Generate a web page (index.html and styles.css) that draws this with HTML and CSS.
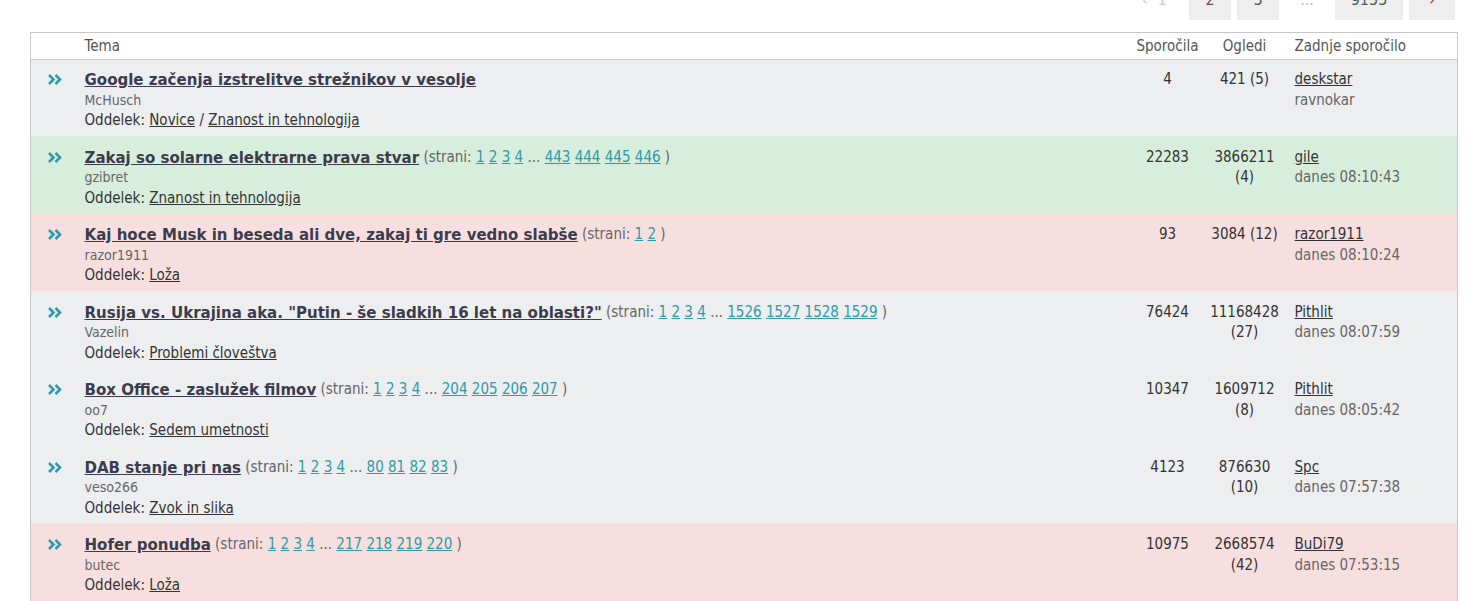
FILE: index.html
```html
<!DOCTYPE html>
<html lang="sl">
<head>
    <meta charset="UTF-8">
    <meta name="viewport" content="width=device-width, initial-scale=1.0">
    <title>Forum</title>
    <link rel="stylesheet" href="styles.css">
</head>
<body>

    <div class="page">
        <div class="pager">
            <span class="pager-off">&lsaquo;</span>
            <span class="pager-off pager-current">1</span>
            <a class="pager-btn" href="#">2</a>
            <a class="pager-btn" href="#">3</a>
            <span class="pager-gap">...</span>
            <a class="pager-btn pager-wide" href="#">9155</a>
            <a class="pager-btn pager-next" href="#">&rsaquo;</a>
        </div>

        <table class="topics">
            <colgroup>
                <col class="c-icon">
                <col>
                <col class="c-posts">
                <col class="c-views">
                <col class="c-last">
            </colgroup>
            <thead>
                <tr>
                    <th></th>
                    <th class="left">Tema</th>
                    <th>Sporočila</th>
                    <th>Ogledi</th>
                    <th class="left">Zadnje sporočilo</th>
                </tr>
            </thead>
            <tbody>
                <tr class="plain">
                    <td class="icon"><svg width="14" height="11" viewBox="0 0 14 11"><path d="M1 1l4.5 4.5L1 10M7.5 1L12 5.5 7.5 10" /></svg></td>
                    <td class="topic">
                        <div class="head"><a class="title" href="#">Google začenja izstrelitve strežnikov v vesolje</a></div>
                        <div class="author">McHusch</div>
                        <div class="section">Oddelek: <a href="#">Novice</a> / <a href="#">Znanost in tehnologija</a></div>
                    </td>
                    <td class="num">4</td>
                    <td class="num">421 (5)</td>
                    <td class="last"><a href="#">deskstar</a><div class="when">ravnokar</div></td>
                </tr>
                <tr class="hot paged">
                    <td class="icon"><svg width="14" height="11" viewBox="0 0 14 11"><path d="M1 1l4.5 4.5L1 10M7.5 1L12 5.5 7.5 10" /></svg></td>
                    <td class="topic">
                        <div class="head"><a class="title" href="#">Zakaj so solarne elektrarne prava stvar</a>
                        <span class="pages">(strani: <a href="#">1</a> <a href="#">2</a> <a href="#">3</a> <a href="#">4</a> ... <a href="#">443</a> <a href="#">444</a> <a href="#">445</a> <a href="#">446</a> )</span></div>
                        <div class="author">gzibret</div>
                        <div class="section">Oddelek: <a href="#">Znanost in tehnologija</a></div>
                    </td>
                    <td class="num">22283</td>
                    <td class="num">3866211 (4)</td>
                    <td class="last"><a href="#">gile</a><div class="when">danes 08:10:43</div></td>
                </tr>
                <tr class="warm paged">
                    <td class="icon"><svg width="14" height="11" viewBox="0 0 14 11"><path d="M1 1l4.5 4.5L1 10M7.5 1L12 5.5 7.5 10" /></svg></td>
                    <td class="topic">
                        <div class="head"><a class="title" href="#">Kaj hoce Musk in beseda ali dve, zakaj ti gre vedno slabše</a>
                        <span class="pages">(strani: <a href="#">1</a> <a href="#">2</a> )</span></div>
                        <div class="author">razor1911</div>
                        <div class="section">Oddelek: <a href="#">Loža</a></div>
                    </td>
                    <td class="num">93</td>
                    <td class="num">3084 (12)</td>
                    <td class="last"><a href="#">razor1911</a><div class="when">danes 08:10:24</div></td>
                </tr>
                <tr class="plain paged">
                    <td class="icon"><svg width="14" height="11" viewBox="0 0 14 11"><path d="M1 1l4.5 4.5L1 10M7.5 1L12 5.5 7.5 10" /></svg></td>
                    <td class="topic">
                        <div class="head"><a class="title" href="#">Rusija vs. Ukrajina aka. "Putin - še sladkih 16 let na oblasti?"</a>
                        <span class="pages">(strani: <a href="#">1</a> <a href="#">2</a> <a href="#">3</a> <a href="#">4</a> ... <a href="#">1526</a> <a href="#">1527</a> <a href="#">1528</a> <a href="#">1529</a> )</span></div>
                        <div class="author">Vazelin</div>
                        <div class="section">Oddelek: <a href="#">Problemi človeštva</a></div>
                    </td>
                    <td class="num">76424</td>
                    <td class="num">11168428 (27)</td>
                    <td class="last"><a href="#">Pithlit</a><div class="when">danes 08:07:59</div></td>
                </tr>
                <tr class="plain paged">
                    <td class="icon"><svg width="14" height="11" viewBox="0 0 14 11"><path d="M1 1l4.5 4.5L1 10M7.5 1L12 5.5 7.5 10" /></svg></td>
                    <td class="topic">
                        <div class="head"><a class="title" href="#">Box Office - zaslužek filmov</a>
                        <span class="pages">(strani: <a href="#">1</a> <a href="#">2</a> <a href="#">3</a> <a href="#">4</a> ... <a href="#">204</a> <a href="#">205</a> <a href="#">206</a> <a href="#">207</a> )</span></div>
                        <div class="author">oo7</div>
                        <div class="section">Oddelek: <a href="#">Sedem umetnosti</a></div>
                    </td>
                    <td class="num">10347</td>
                    <td class="num">1609712 (8)</td>
                    <td class="last"><a href="#">Pithlit</a><div class="when">danes 08:05:42</div></td>
                </tr>
                <tr class="plain paged">
                    <td class="icon"><svg width="14" height="11" viewBox="0 0 14 11"><path d="M1 1l4.5 4.5L1 10M7.5 1L12 5.5 7.5 10" /></svg></td>
                    <td class="topic">
                        <div class="head"><a class="title" href="#">DAB stanje pri nas</a>
                        <span class="pages">(strani: <a href="#">1</a> <a href="#">2</a> <a href="#">3</a> <a href="#">4</a> ... <a href="#">80</a> <a href="#">81</a> <a href="#">82</a> <a href="#">83</a> )</span></div>
                        <div class="author">veso266</div>
                        <div class="section">Oddelek: <a href="#">Zvok in slika</a></div>
                    </td>
                    <td class="num">4123</td>
                    <td class="num">876630 (10)</td>
                    <td class="last"><a href="#">Spc</a><div class="when">danes 07:57:38</div></td>
                </tr>
                <tr class="warm paged">
                    <td class="icon"><svg width="14" height="11" viewBox="0 0 14 11"><path d="M1 1l4.5 4.5L1 10M7.5 1L12 5.5 7.5 10" /></svg></td>
                    <td class="topic">
                        <div class="head"><a class="title" href="#">Hofer ponudba</a>
                        <span class="pages">(strani: <a href="#">1</a> <a href="#">2</a> <a href="#">3</a> <a href="#">4</a> ... <a href="#">217</a> <a href="#">218</a> <a href="#">219</a> <a href="#">220</a> )</span></div>
                        <div class="author">butec</div>
                        <div class="section">Oddelek: <a href="#">Loža</a></div>
                    </td>
                    <td class="num">10975</td>
                    <td class="num">2668574 (42)</td>
                    <td class="last"><a href="#">BuDi79</a><div class="when">danes 07:53:15</div></td>
                </tr>
            </tbody>
        </table>
    </div>

</body>
</html>
```

FILE: styles.css
```css
body {
    margin: 0;
    font-family: "DejaVu Sans Condensed", "DejaVu Sans", sans-serif;
    font-size: 15px;
    color: #333;
    background-color: #fff;
}

.page {
    padding-left: 30px;
    width: 1428px;
}

/* paging above the list */
.pager {
    display: flex;
    justify-content: flex-end;
    gap: 6px;
    margin-top: -20px;
    margin-right: 3px;
    height: 40px;
    font-size: 16px;
    line-height: 40px;
}

.pager-btn {
    display: inline-block;
    min-width: 42px;
    text-align: center;
    background-color: #eee;
    color: #555;
    text-decoration: none;
}

.pager-wide {
    min-width: 68px;
}

.pager-next {
    min-width: 46px;
}

.pager-off {
    color: #ccc;
    padding: 0 2px;
}

.pager-current {
    margin-right: 14px;
}

.pager-gap {
    display: inline-block;
    min-width: 44px;
    text-align: center;
    color: #bbb;
}

/* topic list */
.topics {
    width: 100%;
    margin-top: 12px;
    border: 1px solid #c8c8c8;
    border-collapse: collapse;
    table-layout: fixed;
}

.c-icon {
    width: 54px;
}

.c-posts {
    width: 76px;
}

.c-views {
    width: 78px;
}

.c-last {
    width: 174px;
}

.topics th {
    font-weight: normal;
    color: #555;
    height: 26px;
    padding: 0;
    border-bottom: 1px solid #c8c8c8;
    background-color: #fff;
}

.topics th.left {
    text-align: left;
}

.topics th.left:last-child {
    padding-left: 11px;
}

.topics td {
    vertical-align: top;
    padding: 9px 0 5px 0;
    line-height: 20.5px;
}

.topics .paged td {
    padding-top: 11px;
}

.plain td {
    background-color: #edeef0;
}

.hot td {
    background-color: #d8eedd;
}

.warm td {
    background-color: #f8dfdf;
}

.icon {
    padding-left: 17px !important;
}

.icon svg {
    margin-top: 5px;
    fill: none;
    stroke: #2b9cab;
    stroke-width: 2.6;
}

.head {
    height: 20.5px;
}

.head .title,
.head .pages {
    vertical-align: top;
}

.title {
    font-size: 16.7px;
    font-weight: bold;
    color: #3c3c4c;
}

.pages {
    color: #666;
    font-size: 15px;
}

.pages a {
    color: #2e9aa8;
}

.author {
    color: #666;
    font-size: 14px;
}

.section a {
    color: #333;
}

.num {
    text-align: center;
    padding-left: 3px !important;
    padding-right: 3px !important;
}

.last {
    padding-left: 11px !important;
}

.last a {
    color: #333;
}

.when {
    color: #666;
}
```
